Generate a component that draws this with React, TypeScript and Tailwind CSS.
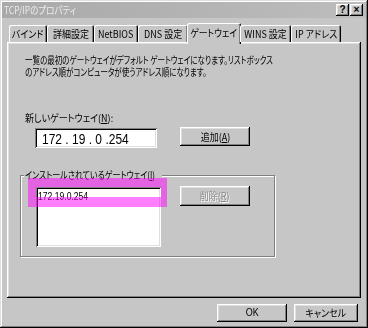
import React from "react";

const raised =
  "shadow-[inset_-1px_-1px_#000,inset_1px_1px_#fff,inset_-2px_-2px_#808080,inset_2px_2px_#dfdfdf]";
const sunken =
  "shadow-[inset_1px_1px_#808080,inset_-1px_-1px_#fff,inset_2px_2px_#000,inset_-2px_-2px_#dfdfdf]";

const Sq = ({ children, className = "" }: { children: React.ReactNode; className?: string }) => (
  <span className={`inline-block whitespace-nowrap ${className}`}>{children}</span>
);

const tabs = [
  { label: "バインド", w: "w-[38px]" },
  { label: "詳細設定", w: "w-[47px]" },
  { label: "NetBIOS", w: "w-[44px]" },
  { label: "DNS 設定", w: "w-[50px]" },
  { label: "ゲートウェイ", w: "w-[54px]", active: true },
  { label: "WINS 設定", w: "w-[51px]" },
  { label: "IP アドレス", w: "w-[50px]" },
];

const Button = ({
  children,
  className = "",
  disabled = false,
}: {
  children: React.ReactNode;
  className?: string;
  disabled?: boolean;
}) => (
  <div
    className={`flex items-center justify-center bg-[#c6c6c6] ${raised} ${
      disabled ? "text-[#8a8a8a] [text-shadow:1px_1px_#fff]" : "text-black"
    } ${className}`}
  >
    {children}
  </div>
);

export default function App() {
  return (
    <div
      className={`relative w-[368px] h-[328px] overflow-hidden bg-[#c6c6c6] p-[2px] text-[10px] leading-[12px] text-black font-['Noto_Sans_CJK_JP','Noto_Sans',sans-serif] [font-feature-settings:'palt'] shadow-[inset_-1px_-1px_#000,inset_1px_1px_#dfdfdf,inset_-2px_-2px_#808080,inset_2px_2px_#fff]`}
    >
      {/* title bar */}
      <div className="flex items-center h-[16px] bg-gradient-to-r from-[#a9a9a9] to-[#bdbdbd] pl-[2px] pr-[3px]">
        <Sq className="origin-left scale-x-[0.85] text-[#ececec]">TCP/IPのプロパティ</Sq>
        <div className="ml-auto flex gap-[1px]">
          <div className={`w-[13px] h-[12px] bg-[#c6c6c6] ${raised} flex items-center justify-center font-['Liberation_Sans',sans-serif] font-bold text-[10px] leading-none`}>
            ?
          </div>
          <div className={`w-[13px] h-[12px] bg-[#c6c6c6] ${raised} flex items-center justify-center font-['Liberation_Sans',sans-serif] font-bold text-[10px] leading-none`}>
            ×
          </div>
        </div>
      </div>

      {/* tabs */}
      <div className="relative z-10 flex items-end h-[21px] mt-[3px] ml-[7px]">
        {tabs.map((t) =>
          t.active ? (
            <div
              key={t.label}
              className={`${t.w} h-[21px] -mb-[2px] -mx-[1px] bg-[#c6c6c6] rounded-t-[2px] shadow-[inset_1px_1px_#fff,inset_-1px_0_#000,inset_-2px_0_#808080] flex justify-center pt-[4px]`}
            >
              <Sq className="scale-x-[0.88]">{t.label}</Sq>
            </div>
          ) : (
            <div
              key={t.label}
              className={`${t.w} h-[17px] rounded-t-[2px] shadow-[inset_1px_1px_#fff,inset_-1px_0_#000,inset_-2px_0_#808080] flex justify-center pt-[3px]`}
            >
              <Sq className="scale-x-[0.9]">{t.label}</Sq>
            </div>
          )
        )}
      </div>

      {/* tab page */}
      <div className={`ml-[5px] w-[354px] h-[256px] pt-[12px] ${raised}`}>
        <div className="pl-[18px]">
          <p className="w-[330px] h-[12px] whitespace-nowrap origin-left scale-x-[0.75]">
            一覧の最初のゲートウェイがデフォルト ゲートウェイになります。リストボックス
          </p>
          <p className="w-[260px] h-[12px] whitespace-nowrap origin-left scale-x-[0.75]">
            のアドレス順がコンピュータが使うアドレス順になります。
          </p>
          <p className="mt-[34px] whitespace-nowrap origin-left scale-x-[0.9]">
            新しいゲートウェイ(<span className="underline">N</span>):
          </p>
        </div>

        <div className="flex items-start mt-[3px] pl-[28px]">
          <div className={`w-[122px] h-[20px] mt-[1px] bg-white ${sunken} flex items-center pl-[7px] font-['Liberation_Sans',sans-serif] text-[15px] leading-none`}>
            <Sq className="origin-left scale-x-[0.8] whitespace-pre">172 . 19 . 0 .254</Sq>
          </div>
          <Button className="ml-[23px] w-[70px] h-[19px]">
            <Sq className="scale-x-[0.9]">
              追加(<span className="underline">A</span>)
            </Sq>
          </Button>
        </div>

        {/* installed gateways group */}
        <div className="relative ml-[13px] mt-[27px] w-[255px] h-[82px] border border-[#808080] shadow-[inset_1px_1px_#fff,1px_1px_#fff] pl-[15px] pt-[11px]">
          <span className="absolute -top-[7px] left-[3px] w-[138px] bg-[#c6c6c6] px-[1px]">
            <Sq className="origin-left scale-x-[0.8]">
              インストールされているゲートウェイ(<span className="underline">I</span>)
            </Sq>
          </span>
          <div className="flex items-start">
            <div className={`w-[125px] h-[60px] bg-white ${sunken} pt-[3px] pl-[2px]`}>
              <Sq className="origin-left scale-x-[0.78] font-['Liberation_Sans',sans-serif] text-[11px] leading-[12px]">
                172.19.0.254
              </Sq>
            </div>
            <Button disabled className="ml-[19px] -mt-[1px] w-[70px] h-[20px]">
              <Sq className="scale-x-[0.9]">
                削除(<span className="underline">R</span>)
              </Sq>
            </Button>
          </div>
        </div>
      </div>

      {/* dialog buttons */}
      <div className="flex mt-[6px] pl-[215px] gap-[7px]">
        <Button className="w-[70px] h-[18px]">
          <Sq className="font-['Liberation_Sans',sans-serif] scale-x-[0.9]">OK</Sq>
        </Button>
        <Button className="w-[64px] h-[18px]">
          <Sq className="scale-x-[0.9]">キャンセル</Sq>
        </Button>
      </div>

      {/* pink highlight annotation */}
      <div className="absolute left-[28px] top-[178px] w-[139px] h-[29px] border-solid border-t-[9px] border-b-[10px] border-l-[8px] border-r-[6px] border-[rgba(255,0,255,0.5)]" />
    </div>
  );
}
